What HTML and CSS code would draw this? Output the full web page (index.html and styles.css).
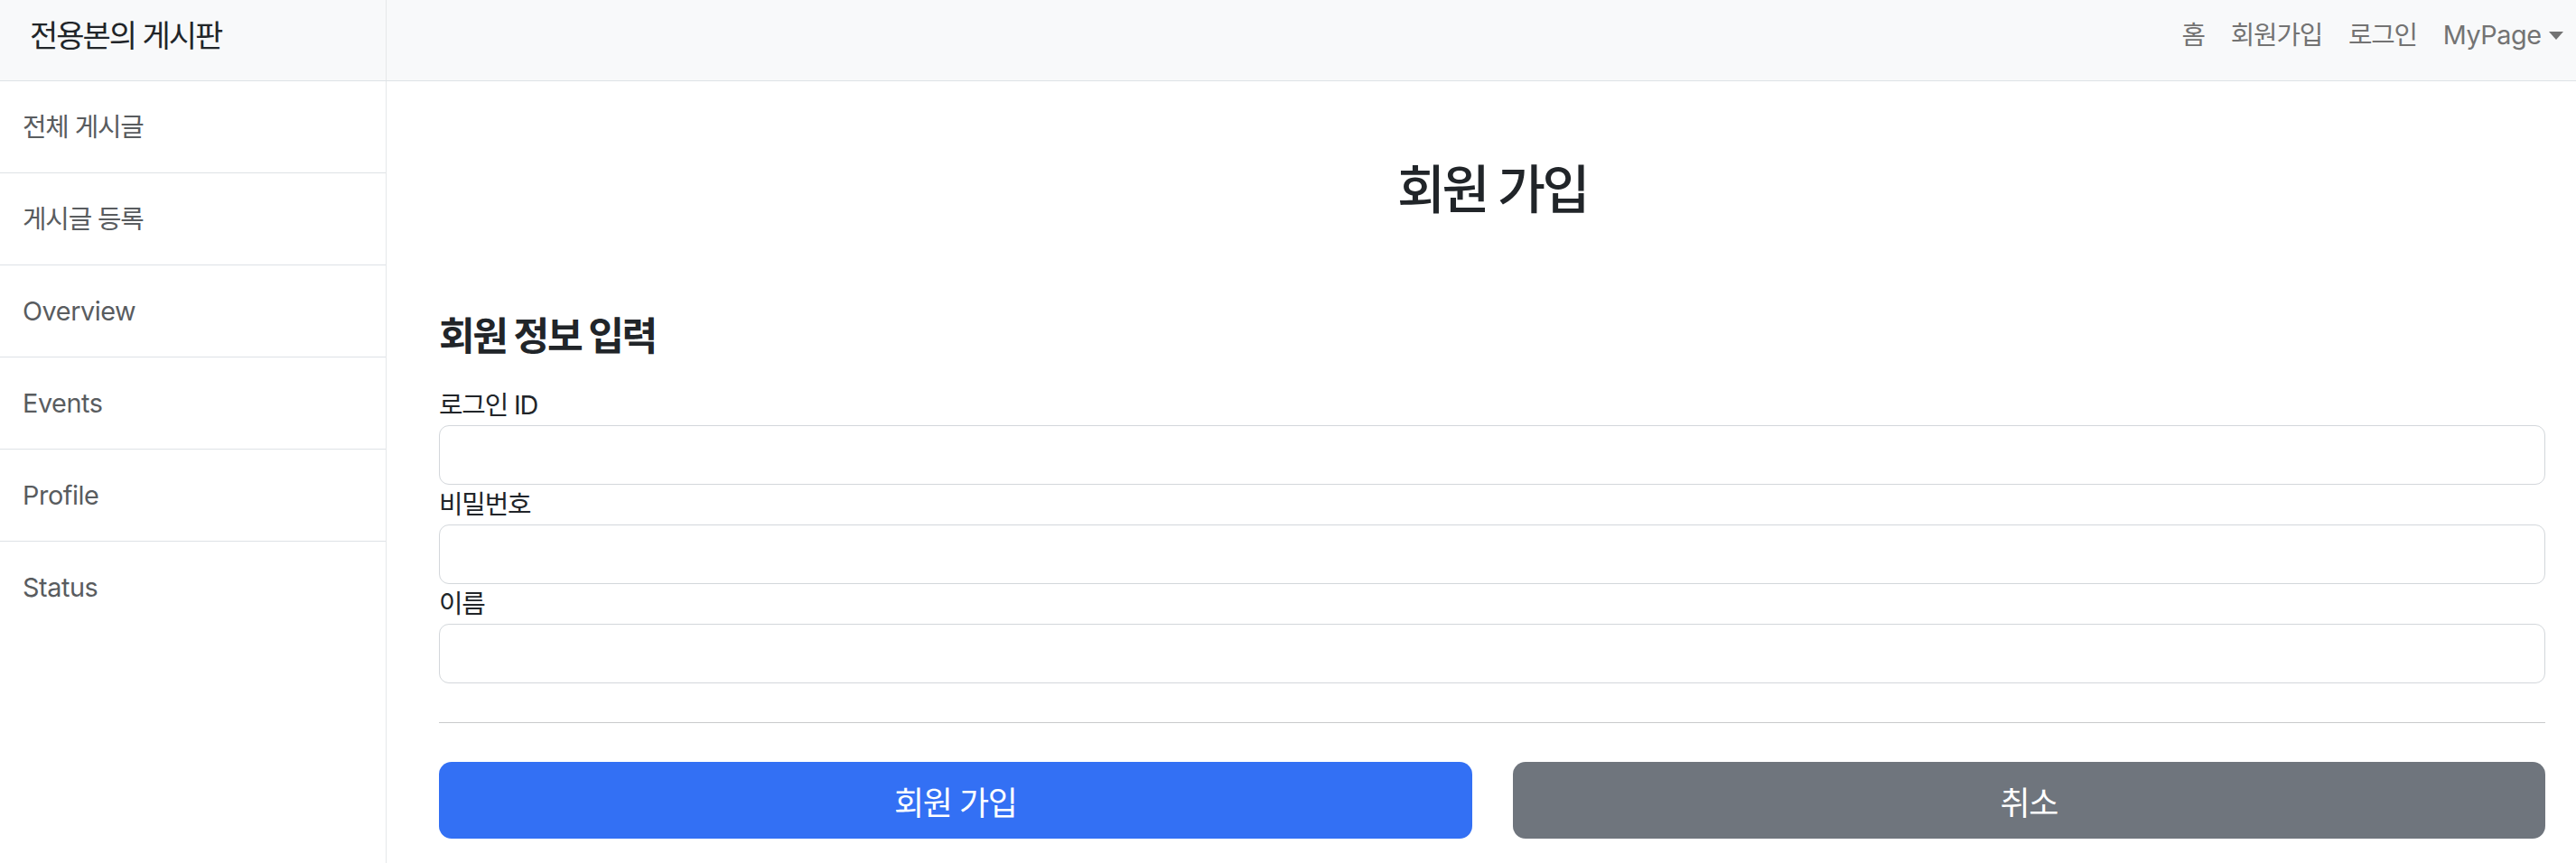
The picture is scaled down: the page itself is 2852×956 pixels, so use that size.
FILE: index.html
```html
<!DOCTYPE html>
<html lang="ko">
<head>
<meta charset="utf-8">
<title>회원 가입</title>
<link rel="stylesheet" href="styles.css">
</head>
<body>
<header class="navbar">
  <a class="brand" href="#">전용본의 게시판</a>
  <nav class="nav-right">
    <a class="nav-link" href="#">홈</a>
    <a class="nav-link" href="#">회원가입</a>
    <a class="nav-link" href="#">로그인</a>
    <a class="nav-link latin" href="#">MyPage<span class="caret"></span></a>
  </nav>
</header>
<div class="layout">
  <aside class="sidebar">
    <a class="side-item" href="#">전체 게시글</a>
    <a class="side-item" href="#">게시글 등록</a>
    <a class="side-item latin" href="#">Overview</a>
    <a class="side-item latin" href="#">Events</a>
    <a class="side-item latin" href="#">Profile</a>
    <a class="side-item latin last" href="#">Status</a>
  </aside>
  <main class="content">
    <h2 class="page-title">회원 가입</h2>
    <h4 class="section-title">회원 정보 입력</h4>
    <form class="form">
      <label class="label" for="loginId">로그인 ID</label>
      <input class="input" id="loginId" type="text">
      <label class="label" for="password">비밀번호</label>
      <input class="input" id="password" type="password">
      <label class="label" for="name">이름</label>
      <input class="input" id="name" type="text">
      <hr class="divider">
      <div class="buttons">
        <button class="btn btn-primary" type="button">회원 가입</button>
        <button class="btn btn-secondary" type="button">취소</button>
      </div>
    </form>
  </main>
</div>
</body>
</html>
```

FILE: styles.css
```css
* { box-sizing: border-box; }
html, body { margin: 0; padding: 0; }
body {
  font-family: Inter, "Noto Sans CJK KR", sans-serif;
  font-size: 28.8px;
  line-height: 1.5;
  letter-spacing: -0.04em;
  color: #212529;
  background: #fff;
  height: 956px;
  overflow: hidden;
}
a { text-decoration: none; }
.latin { letter-spacing: -0.015em; }

.navbar {
  display: flex;
  align-items: stretch;
  height: 90px;
  background: #f8f9fa;
  border-bottom: 1px solid #dee2e6;
}
.brand {
  width: 428px;
  border-right: 1px solid #e6e8ea;
  padding: 0 0 11px 33px;
  display: flex;
  align-items: center;
  font-size: 34px;
  letter-spacing: -0.06em;
  color: #212529;
}
.nav-right {
  margin-left: auto;
  display: flex;
  align-items: center;
  padding-bottom: 11px;
}
.nav-link {
  color: #737373;
  padding: 0 14.4px;
}
.caret {
  display: inline-block;
  margin-left: 8px;
  vertical-align: 5px;
  border-top: 9px solid #737373;
  border-left: 8.5px solid transparent;
  border-right: 8.5px solid transparent;
}

.layout {
  display: flex;
  height: 866px;
}
.sidebar {
  width: 428px;
  flex: none;
  border-right: 1px solid #e6e8ea;
  display: flex;
  flex-direction: column;
}
.side-item {
  height: 102px;
  display: flex;
  align-items: center;
  padding-left: 25px;
  color: #595c5f;
  border-bottom: 1px solid #dee2e6;
}
.side-item.last { border-bottom: none; }

.content {
  flex: 1;
  padding: 86px 34px 0 58px;
}
.page-title {
  margin: 0;
  font-size: 57.6px;
  line-height: 69px;
  font-weight: 500;
  letter-spacing: -0.06em;
  text-align: center;
}
.section-title {
  margin: 101px 0 29px;
  font-size: 43.2px;
  line-height: 52px;
  font-weight: 700;
  letter-spacing: -0.055em;
}
.form {
  display: flex;
  flex-direction: column;
}
.label {
  display: block;
  line-height: 44px;
  height: 44px;
}
.input {
  display: block;
  width: 100%;
  height: 66px;
  border: 1px solid #d3d7db;
  border-radius: 11px;
  background: #fff;
  font: inherit;
  padding: 0 22px;
}
.divider {
  margin: 43px 0 43px;
  border: none;
  border-top: 1px solid #c9cacb;
  height: 0;
}
.buttons {
  display: grid;
  grid-template-columns: 1fr 1fr;
  gap: 45px;
}
.btn {
  height: 85px;
  border: none;
  border-radius: 14px;
  font-family: Inter, "Noto Sans CJK KR", sans-serif;
  font-size: 36px;
  letter-spacing: -0.04em;
  color: #fff;
  cursor: pointer;
}
.btn-primary { background: #3370f4; }
.btn-secondary { background: #6f757d; }
```
